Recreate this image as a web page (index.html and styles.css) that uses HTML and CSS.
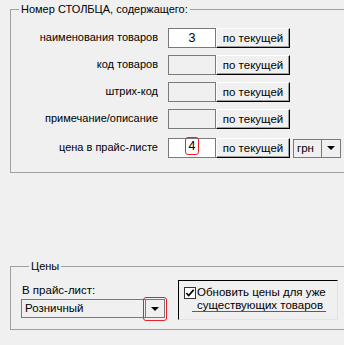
FILE: index.html
```html
<!DOCTYPE html>
<html lang="ru">
<head>
<meta charset="UTF-8">
<title>Импорт прайс-листа</title>
<link rel="stylesheet" href="styles.css">
</head>
<body>

<fieldset class="group group-cols">
  <legend>Номер СТОЛБЦА, содержащего:</legend>
  <div class="rows">
    <div class="row">
      <label>наименования товаров</label>
      <div class="edit">3</div>
      <button>по текущей</button>
    </div>
    <div class="row">
      <label>код товаров</label>
      <div class="edit off"></div>
      <button>по текущей</button>
    </div>
    <div class="row">
      <label>штрих-код</label>
      <div class="edit off"></div>
      <button>по текущей</button>
    </div>
    <div class="row">
      <label>примечание/описание</label>
      <div class="edit off"></div>
      <button>по текущей</button>
    </div>
    <div class="row row-price">
      <label>цена в прайс-листе</label>
      <div class="edit"><span class="mark">4</span></div>
      <button>по текущей</button>
      <div class="combo combo-cur">
        <span class="combo-text">грн</span>
        <span class="combo-btn"><i class="arrow"></i></span>
      </div>
    </div>
  </div>
</fieldset>

<fieldset class="group group-prices">
  <legend>Цены</legend>
  <div class="prices">
    <div class="price-list">
      <div class="caption">В прайс-лист:</div>
      <div class="combo combo-list">
        <span class="combo-text">Розничный</span>
        <span class="combo-btn"><i class="arrow"></i><span class="ring"></span></span>
      </div>
    </div>
    <div class="panel">
      <span class="check">
        <svg width="11" height="11" viewBox="0 0 11 11"><path d="M1.5 5 L4 7.8 L9.5 1.5" fill="none" stroke="#000" stroke-width="1.8"/></svg>
      </span>
      <div class="check-text">Обновить цены для уже<br><span class="underline">существующих товаров</span></div>
    </div>
  </div>
</fieldset>

</body>
</html>
```

FILE: styles.css
```css
* { box-sizing: border-box; }

html, body {
  margin: 0;
  padding: 0;
}

body {
  width: 344px;
  height: 345px;
  overflow: hidden;
  background: #f0f0f0;
  color: #000;
  font-family: "Liberation Sans", Arial, sans-serif;
  font-size: 11px;
}

.group {
  margin: 2px 0 0 10px;
  width: 340px;
  border: 1px solid #a0a0a0;
  border-right: 0;
  padding: 12px 0 14px 0;
  min-width: 0;
}

.group legend {
  margin-left: 8px;
  padding: 0 2px;
  line-height: 14px;
  font-size: 11px;
}

.rows {
  display: flex;
  flex-direction: column;
  gap: 7px;
}

.row {
  display: flex;
  align-items: center;
  height: 20px;
}

.row-price { margin-top: 2px; }

.row label {
  width: 147px;
  margin-right: 10px;
  text-align: right;
  padding-bottom: 2px;
  font-size: 11px;
}

.edit {
  width: 48px;
  height: 20px;
  border: 1px solid #7a7a7a;
  background: #fff;
  text-align: center;
  line-height: 18px;
  font-size: 12.5px;
}

.edit.off { background: #f0f0f0; }

.mark {
  display: inline-block;
  height: 18px;
  padding: 0 3px;
  margin-top: -2px;
  border: 1px solid #e8202a;
  border-radius: 3px;
  line-height: 17px;
  vertical-align: top;
}

.row button {
  width: 74px;
  height: 20px;
  margin: 0;
  padding: 0;
  border: 1px solid;
  border-color: #fff #000 #000 #fff;
  box-shadow: inset -1px -1px 0 #a0a0a0;
  background: #f0f0f0;
  font: inherit;
  font-size: 11.5px;
  line-height: 18px;
  color: #000;
}

.combo {
  display: flex;
  height: 19px;
  border: 1px solid #7a7a7a;
  background: #f0f0f0;
  position: relative;
}

.combo-text {
  flex: 1;
  padding-left: 3px;
  line-height: 17px;
  font-size: 11.5px;
}

.combo-btn {
  width: 19px;
  border-left: 1px solid #7a7a7a;
  display: flex;
  align-items: center;
  justify-content: center;
  position: relative;
}

.arrow {
  width: 0;
  height: 0;
  border-left: 4px solid transparent;
  border-right: 4px solid transparent;
  border-top: 4px solid #000;
}

.combo-cur {
  width: 48px;
  margin-left: 3px;
}

.group-prices {
  margin-top: 86px;
  padding: 7px 0 9px 10px;
}

.prices {
  display: flex;
  align-items: flex-start;
}

.price-list {
  width: 144px;
}

.caption {
  margin-top: 3px;
  padding-left: 1px;
  line-height: 14px;
  font-size: 11.5px;
}

.combo-list {
  margin-top: 2px;
}

.ring {
  position: absolute;
  left: -3px;
  top: -3px;
  width: 24px;
  height: 24px;
  border: 1px solid #e8202a;
  border-radius: 3px;
}

.panel {
  margin-left: 13px;
  width: 160px;
  height: 40px;
  border: 1px solid;
  border-color: #000 #e3e3e3 #e3e3e3 #000;
  display: flex;
  align-items: flex-start;
  padding: 5px 0 0 5px;
  font-size: 11.5px;
}

.check {
  width: 12px;
  height: 12px;
  margin-top: 1px;
  border: 1px solid #333;
  background: #fff;
  display: flex;
  flex-shrink: 0;
}

.check svg { display: block; }

.check-text {
  margin-left: 1px;
  line-height: 13px;
  white-space: nowrap;
}

.underline {
  display: inline-block;
  margin-left: -5px;
  padding: 0 3px 0 5px;
  border-bottom: 1px solid #e8202a;
  line-height: 12px;
}
```
